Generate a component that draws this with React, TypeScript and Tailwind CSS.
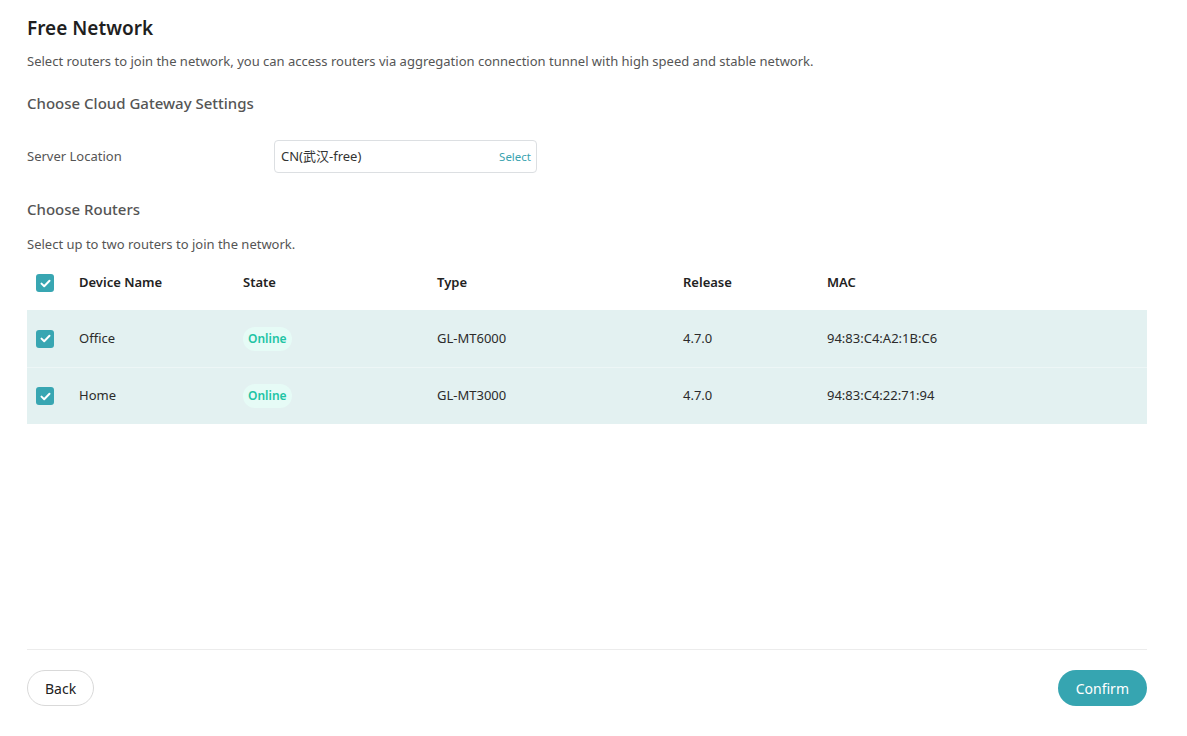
import React from 'react';

const font = { fontFamily: '"Noto Sans", "Noto Sans CJK SC", sans-serif' };

type Router = { name: string; state: string; type: string; release: string; mac: string };

const routers: Router[] = [
  { name: 'Office', state: 'Online', type: 'GL-MT6000', release: '4.7.0', mac: '94:83:C4:A2:1B:C6' },
  { name: 'Home', state: 'Online', type: 'GL-MT3000', release: '4.7.0', mac: '94:83:C4:22:71:94' },
];

const Check: React.FC = () => (
  <span className="flex h-[18px] w-[18px] items-center justify-center rounded-[3px] bg-[#38a6b2]">
    <svg width="11" height="9" viewBox="0 0 11 9" fill="none">
      <path d="M1.5 4.6L4.2 7.2L9.5 1.8" stroke="white" strokeWidth="2" strokeLinecap="round" strokeLinejoin="round" />
    </svg>
  </span>
);

const cols = 'grid grid-cols-[52px_164px_194px_246px_144px_1fr] items-center';

export default function App() {
  return (
    <div className="min-h-[736px] bg-white pl-[27px] pr-[40px] text-[#333]" style={font}>
      <h1 className="pt-[14px] text-[19px] font-semibold leading-[28px] text-[#1f1f1f]">Free Network</h1>
      <p className="mt-[10px] text-[13px] leading-[18px] text-[#555]">
        Select routers to join the network, you can access routers via aggregation connection tunnel with high speed and stable network.
      </p>

      <h2 className="mt-[22px] text-[15px] font-medium leading-[22px] text-[#555]">Choose Cloud Gateway Settings</h2>

      <div className="mt-[26px] flex items-center">
        <span className="w-[247px] text-[13px] text-[#555]">Server Location</span>
        <div className="flex h-[33px] w-[263px] items-center justify-between rounded-[4px] border border-[#dcdfe2] pl-[6px] pr-[5px]">
          <span className="text-[13px] text-[#333]">CN(武汉-free)</span>
          <span className="text-[11.5px] text-[#3aa3b0]">Select</span>
        </div>
      </div>

      <h2 className="mt-[25px] text-[15px] font-medium leading-[22px] text-[#555]">Choose Routers</h2>
      <p className="mt-[15px] text-[13px] leading-[18px] text-[#555]">Select up to two routers to join the network.</p>

      <div className="mt-[3px]">
        <div className={`${cols} h-[54px] text-[13px] font-semibold text-[#222]`}>
          <div className="pl-[9px]"><Check /></div>
          <div>Device Name</div>
          <div>State</div>
          <div>Type</div>
          <div>Release</div>
          <div>MAC</div>
        </div>
        {routers.map((r, i) => (
          <div
            key={r.name}
            className={`${cols} h-[57px] bg-[#e3f1f1] text-[13px] text-[#2b2b2b] ${i > 0 ? 'border-t border-[#edf6f6]' : ''}`}
          >
            <div className="pl-[9px]"><Check /></div>
            <div>{r.name}</div>
            <div>
              <span className="inline-flex h-[24px] items-center rounded-full bg-[#e6fbf6] px-[5px] text-[12px] font-semibold text-[#20c4a4]">
                {r.state}
              </span>
            </div>
            <div>{r.type}</div>
            <div>{r.release}</div>
            <div>{r.mac}</div>
          </div>
        ))}
      </div>

      <div className="mt-[225px] border-t border-[#ececec]" />
      <div className="flex items-center justify-between pt-[20px]">
        <button className="h-[36px] rounded-full border border-[#d9d9d9] px-[17px] text-[14px] text-[#222]">Back</button>
        <button className="h-[36px] rounded-full bg-[#36a5b1] px-[18px] text-[14px] text-white">Confirm</button>
      </div>
    </div>
  );
}
